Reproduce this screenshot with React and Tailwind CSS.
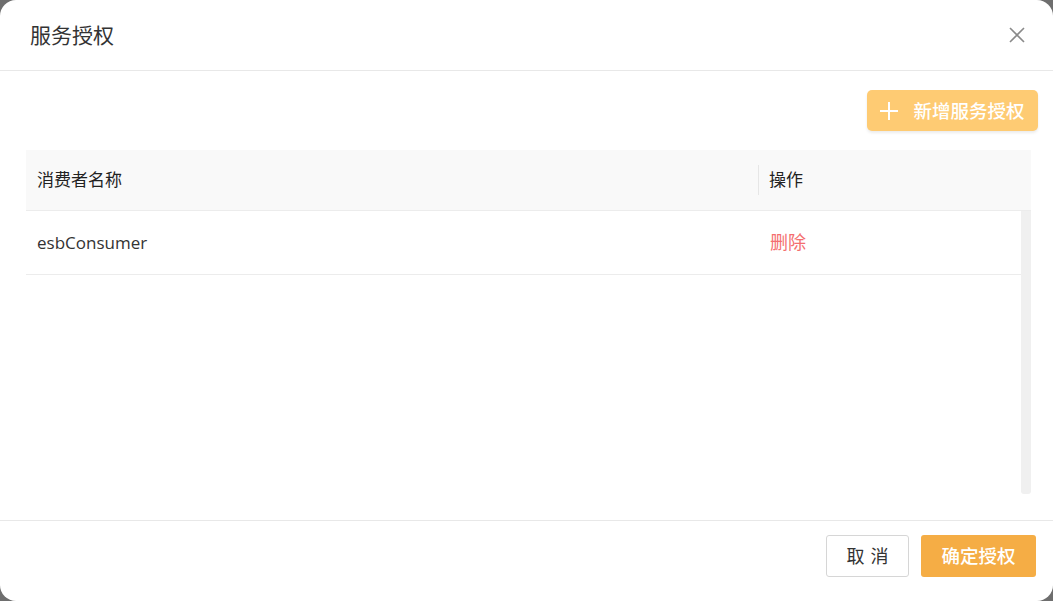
const font = { fontFamily: '"Open Sans", "Noto Sans CJK SC", sans-serif' };

function CloseIcon() {
  return (
    <svg width="16" height="16" viewBox="0 0 16 16" className="text-[#8a8a8a]">
      <path d="M1 1L15 15M15 1L1 15" stroke="currentColor" strokeWidth="1.6" />
    </svg>
  );
}

function PlusIcon() {
  return (
    <svg width="18" height="18" viewBox="0 0 18 18">
      <path d="M9 0V18M0 9H18" stroke="white" strokeWidth="2" />
    </svg>
  );
}

export default function App() {
  const rows = [{ name: "esbConsumer" }];

  return (
    <div className="w-[1053px] h-[601px] bg-[#6e6e6e]" style={font}>
      <div className="w-full h-full bg-white rounded-[16px] flex flex-col">
        <div className="h-[71px] shrink-0 flex items-center justify-between pl-[30px] pr-[28px] border-b border-[#e8e8e8]">
          <h2 className="text-[21px] text-[#333] leading-none">服务授权</h2>
          <button className="w-[16px] h-[16px] flex items-center justify-center">
            <CloseIcon />
          </button>
        </div>

        <div className="h-[449px] shrink-0 pl-[26px] pr-[22px] pt-[19px]">
          <div className="flex justify-end -mr-[7px] mb-[19px]">
            <button className="h-[41px] w-[171px] flex items-center justify-center gap-[15px] rounded-[5px] bg-[#fecb73] text-white text-[18.5px] font-medium shadow-[0_2px_3px_rgba(0,0,0,0.08)]">
              <PlusIcon />
              <span>新增服务授权</span>
            </button>
          </div>

          <div className="w-[1005px]">
            <div className="h-[61px] bg-[#f9f9f9] flex items-center text-[17px] text-[#222] border-b border-[#ececec]">
              <div className="w-[732px] pl-[11px]">消费者名称</div>
              <div className="w-px h-[30px] bg-[#e6e6e6]" />
              <div className="pl-[10px]">操作</div>
            </div>
            <div className="flex h-[283px]">
              <div className="flex-1">
                {rows.map((r) => (
                  <div key={r.name} className="h-[64px] flex items-center border-b border-[#ececec] text-[17px]">
                    <div className="w-[732px] pl-[11px] text-[#333]">{r.name}</div>
                    <div className="pl-[12px] text-[#f46e6e] text-[18px] cursor-pointer">删除</div>
                  </div>
                ))}
              </div>
              <div className="w-[10px] h-full bg-[#f0f0f0] rounded-b-[3px]" />
            </div>
          </div>
        </div>

        <div className="flex-1 border-t border-[#e8e8e8] flex justify-end items-start gap-[12px] pt-[14px] pr-[17px]">
          <button className="h-[42px] w-[83px] border border-[#d6d6d6] rounded-[3px] bg-white text-[18px] text-[#333] tracking-[6px] pl-[6px]">
            取消
          </button>
          <button className="h-[42px] w-[115px] rounded-[3px] bg-[#f5ad45] text-[18.5px] text-white font-medium">
            确定授权
          </button>
        </div>
      </div>
    </div>
  );
}
